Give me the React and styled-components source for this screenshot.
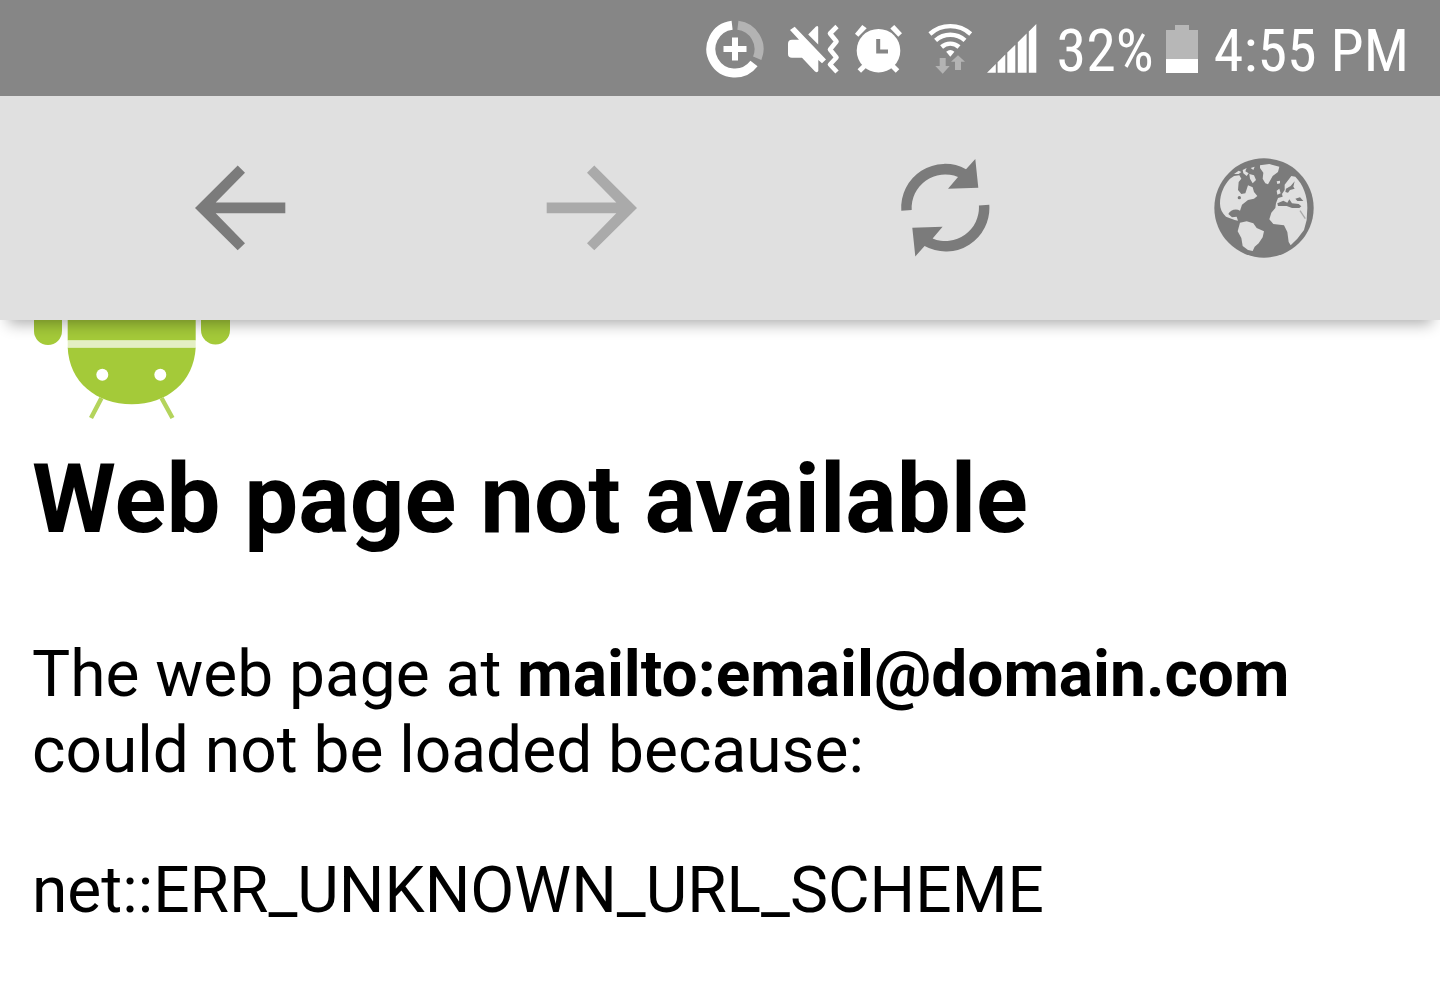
import React from "react";
import styled, { createGlobalStyle } from "styled-components";

const DataSaverIcon = () => (
  <StatusIcon width="64" height="64" viewBox="0 0 64 64">
    <g fill="none" strokeWidth="9">
      <path stroke="#b3b3b3" d="M32.9 9.2A24 24 0 0 1 52.2 42.2" />
      <path stroke="#fff" d="M27.1 9.2A24 24 0 1 0 49 47.6" />
      <path stroke="#fff" strokeWidth="6" d="M18.5 33h23M30 21.5v23" />
    </g>
  </StatusIcon>
);

const VibrateIcon = () => (
  <StatusIcon width="64" height="64" viewBox="0 0 64 64">
    <path
      fill="#fff"
      d="M13 14L17.7 10.7L49 43.5L45 47.3L41.3 44V55Q40.5 57 38 55.5L25 41.8H15Q11 41.8 11 38V28Q11 23.8 15 23.8H22Z"
    />
    <path fill="#fff" d="M31.2 18.5L39 10.5Q41.2 9 41.2 11.5V28.5Z" />
    <path
      fill="none"
      stroke="#fff"
      strokeWidth="4.6"
      strokeLinejoin="round"
      d="M60 10.5L53 17.5L59.5 25.5L53 33.5L59.5 41.5L53 48.5L60 56"
    />
  </StatusIcon>
);

const AlarmIcon = () => (
  <StatusIcon width="64" height="64" viewBox="0 0 64 64">
    <g fill="#fff">
      <circle cx="29.5" cy="34.7" r="21.8" />
      <path d="M6 17.7L13.3 9L17.7 12.3L9.3 20.7Z" />
      <path d="M45.3 9L53 17.3L49.3 20.7L41.3 12.5Z" />
    </g>
    <path
      fill="none"
      stroke="#fff"
      strokeWidth="5"
      d="M10.3 55L18 47.5M48.5 55L41 47.5"
    />
    <path fill="none" stroke="#868686" strokeWidth="4" d="M29.2 23V35.4H39" />
  </StatusIcon>
);

const WifiIcon = () => (
  <StatusIcon width="56" height="64" viewBox="0 0 56 64">
    <g fill="none" stroke="#fff" strokeWidth="4.4">
      <path d="M8.9 18A30.5 30.5 0 0 1 49.7 18" />
      <path d="M14.6 24.4A22 22 0 0 1 44 24.4" />
      <path d="M20.6 31A13 13 0 0 1 38 31" />
    </g>
    <path fill="#fff" d="M29.3 40.7L25.2 35.7A6.7 6.7 0 0 1 33.4 35.7Z" />
    <g fill="#b3b3b3">
      <path d="M18.7 42H24.7V50H28.7L21.7 57.7L14.3 50H18.7Z" />
      <path d="M37 39.3L44 45.7H40V54H34V45.7H30Z" />
    </g>
  </StatusIcon>
);

const SignalIcon = () => (
  <StatusIcon width="56" height="64" viewBox="0 0 56 64">
    <path
      fill="#fff"
      d="M2 56.7L10.8 48V56.7ZM12.6 46.2L20.3 38.6V56.7H12.6ZM22.3 36.6L30.3 28.7V56.7H22.3ZM32.8 26.3L41.6 17.6V56.7H32.8ZM43.8 15.4L51.3 8V56.7H43.8Z"
    />
  </StatusIcon>
);

const BatteryIcon = () => (
  <StatusIcon width="32" height="50" viewBox="0 0 32 50">
    <path fill="#b7b7b7" d="M9 2H23V7H32V36H0V7H9Z" />
    <path fill="#fff" d="M0 36H32V50H0Z" />
  </StatusIcon>
);

const BackIcon = () => (
  <svg width="96" height="96" viewBox="0 0 96 96" fill="currentColor">
    <path d="M3 48L45.7 5.5L53 12.8L23.7 42.5H93.3V53.3H23.7L53 83.3L45.7 90.3Z" />
  </svg>
);

const ForwardIcon = () => (
  <svg width="96" height="96" viewBox="0 0 96 96" fill="currentColor">
    <path d="M93 48L50.3 5.5L43 12.8L72.3 42.5H2.7V53.3H72.3L43 83.3L50.3 90.3Z" />
  </svg>
);

const ReloadIcon = () => {
  const arrow =
    "M9.3 54.7A43.7 43.7 0 0 1 74 13.3L83.3 3L86.3 31.7L56 32.7L66 21A33.5 33.5 0 0 0 19.7 54Z";
  return (
    <svg width="104" height="104" viewBox="0 0 104 104" fill="currentColor">
      <path d={arrow} />
      <path d={arrow} transform="rotate(180 53.3 51.7)" />
    </svg>
  );
};

const GlobeIcon = () => (
  <svg width="104" height="104" viewBox="24 22 312 312">
    <circle cx="180" cy="178" r="149" fill="currentColor" />
    <g fill="#e0e0e0">
      {/* americas */}
      <path d="M48 165C48 134 60 110 78 90L90 82L106 80L112 90L104 100L102 124L112 136L124 134L132 110L146 116L150 130L160 142L150 150L132 154L114 168L108 186C96 178 78 184 73 196L84 206L98 204L102 216L92 214L66 204C54 192 48 180 48 165Z" />
      <path d="M90 76L104 66L112 70L104 76ZM116 64L128 58L124 68L134 74L128 82L118 74ZM140 58L152 54L148 64ZM136 76L150 80L156 94L146 104L138 90Z" />
      <path d="M108 222L128 218L148 224L158 238L180 248L176 266L164 284L152 294L146 307L132 304L116 292L112 268L101 248Z" />
      <path d="M168 50L196 46L226 54L222 70L206 82L192 107L184 104L176 90L178 72L168 58Z" />
      {/* europe and africa */}
      <path d="M216 164L222 148L236 144L234 136L242 124L242 108L262 82L274 84C298 108 310 142 310 178L308 214L300 244L280 270L260 290L254 280L250 250L240 230L208 226L196 212L202 192L214 178Z" />
      <path d="M218 98L228 96L228 104L220 106ZM218 126L226 120L230 134L220 138Z" />
    </g>
    <g fill="currentColor">
      <path d="M220 164L238 156L250 162L256 152L264 164L284 166L292 173L286 178L264 178L248 172L222 172Z" />
      <path d="M274 150L288 146L298 157L280 157ZM246 120L260 112L272 98L268 114L272 120L258 124L252 132L244 130Z" />
      <circle cx="106" cy="147" r="5" />
    </g>
    <path fill="none" stroke="#a9a9a9" strokeWidth="4" d="M288 186L304 210" />
  </svg>
);

const Robot = () => (
  <RobotImage width="200" height="100" viewBox="0 0 200 100">
    <g fill="#a4ca39">
      <path d="M2 0H30V11A14 14 0 0 1 2 11Z" />
      <path d="M169 0H198V10A14.5 14.5 0 0 1 169 10Z" />
      <path d="M35.7 0H163.7V20.5H35.7Z" />
      <path d="M35.7 27.5H163.7C162 62 135 84.3 99.7 84.3S37 62 35.7 27.5Z" />
    </g>
    <path fill="#e4efc4" d="M35.7 20.5H163.7V27.5H35.7Z" />
    <path
      fill="none"
      stroke="#b4d45c"
      strokeWidth="4.5"
      d="M69.5 78L59 98M129.5 78L140.5 98"
    />
    <g fill="#fff">
      <circle cx="70.3" cy="54.7" r="6" />
      <circle cx="128.3" cy="54.7" r="6" />
    </g>
  </RobotImage>
);

const App = () => {
  return (
    <>
      <GlobalStyle />
      <StatusBar>
        <IconGroup>
          <DataSaverIcon />
          <VibrateIcon />
          <AlarmIcon />
          <WifiIcon />
          <SignalIcon />
        </IconGroup>
        <Battery>
          <StatusText>32%</StatusText>
          <BatteryIcon />
        </Battery>
        <StatusText>4:55 PM</StatusText>
      </StatusBar>
      <Toolbar>
        <ToolButton aria-label="Back">
          <BackIcon />
        </ToolButton>
        <ToolButton aria-label="Forward" disabled>
          <ForwardIcon />
        </ToolButton>
        <ToolButton aria-label="Reload">
          <ReloadIcon />
        </ToolButton>
        <ToolButton aria-label="Open in browser">
          <GlobeIcon />
        </ToolButton>
      </Toolbar>
      <Content>
        <Robot />
        <Title>Web page not available</Title>
        <Message>
          The web page at <strong>mailto:email@domain.com</strong> could not be
          loaded because:
        </Message>
        <Message>net::ERR_UNKNOWN_URL_SCHEME</Message>
      </Content>
    </>
  );
};

export default App;

const GlobalStyle = createGlobalStyle`
  * {
    box-sizing: border-box;
  }
  body {
    margin: 0;
    background: #fff;
    color: #000;
    font-family: Roboto, "Liberation Sans", sans-serif;
  }
`;

const StatusBar = styled.header`
  display: flex;
  justify-content: flex-end;
  align-items: center;
  gap: 16px;
  height: 96px;
  padding: 0 31px;
  background: #868686;
  color: #fff;
`;

const IconGroup = styled.div`
  display: flex;
  align-items: center;
  gap: 8px;
`;

const Battery = styled.div`
  display: flex;
  align-items: center;
  gap: 12px;
`;

const StatusIcon = styled.svg`
  display: block;
  flex: none;
`;

const StatusText = styled.span`
  padding-top: 6px;
  font-family: "Roboto Condensed", "Liberation Sans Narrow", Roboto, sans-serif;
  font-size: 60px;
  line-height: 72px;
  white-space: nowrap;
`;

const Toolbar = styled.nav`
  position: relative;
  display: grid;
  grid-template-columns: 11fr 11fr 11fr 9fr;
  height: 224px;
  padding: 0 32px 0 64px;
  background: #e0e0e0;
  box-shadow: 0 12px 14px -8px rgba(0, 0, 0, 0.32);
`;

const ToolButton = styled.button`
  display: flex;
  justify-content: center;
  align-items: center;
  padding: 0;
  border: none;
  background: none;
  color: #7b7b7b;
  cursor: pointer;
  &:disabled {
    color: #aaa;
    cursor: default;
  }
`;

const Content = styled.main`
  padding: 0 32px;
`;

const RobotImage = styled.svg`
  display: block;
`;

const Title = styled.h1`
  margin: 23px 0 82px;
  font-size: 96px;
  line-height: 112px;
  font-weight: 700;
`;

const Message = styled.p`
  margin: 0 0 64px;
  font-size: 64px;
  line-height: 76px;
  strong {
    font-weight: 700;
  }
`;
